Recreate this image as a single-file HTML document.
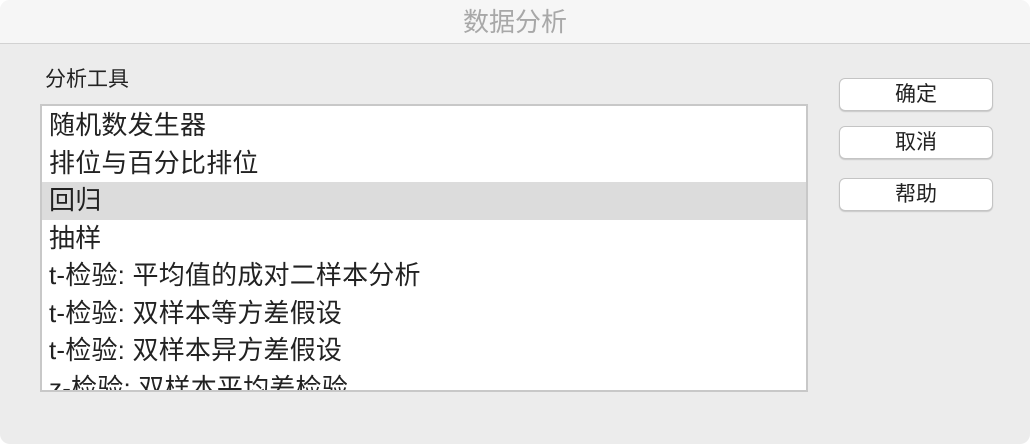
<!DOCTYPE html>
<html><head><meta charset="utf-8"><style>
body{margin:0;width:1030px;height:444px;background:#fff;font-family:"Liberation Sans","Noto Sans CJK SC",sans-serif;position:relative;overflow:hidden}
.win{position:absolute;left:0;top:0;width:1030px;height:444px;background:#ececec;border-radius:10px;overflow:hidden}
.title{position:absolute;left:0;top:0;width:1030px;height:43px;background:#f6f6f6;border-bottom:1px solid #d2d2d2;text-align:center;line-height:44px;font-size:26px;color:#a8a8a8}
.lbl{position:absolute;left:45px;top:63px;font-size:21px;color:#222}
.list{position:absolute;left:40px;top:104px;width:764px;height:284px;background:#fff;border:2px solid #c8c8c8;overflow:hidden}
.row{position:absolute;left:0;width:100%;height:37.5px;line-height:37px;font-size:26px;color:#222;padding-left:7px;box-sizing:border-box;white-space:nowrap;letter-spacing:0.2px}
.sel{background:#dcdcdc}
.btn{position:absolute;left:839px;width:152px;height:31px;background:#fff;border:1px solid #c4c4c4;border-radius:6px;box-shadow:0 1px 1px rgba(0,0,0,.15);text-align:center;line-height:31px;font-size:21px;color:#222}
</style></head><body>
<div class="win">
<div class="title">数据分析</div>
<div class="lbl">分析工具</div>
<div class="list">
<div class="row" style="top:1px">随机数发生器</div>
<div class="row" style="top:38.5px">排位与百分比排位</div>
<div class="row sel" style="top:76px">回归</div>
<div class="row" style="top:113.5px">抽样</div>
<div class="row" style="top:151px">t-检验: 平均值的成对二样本分析</div>
<div class="row" style="top:188.5px">t-检验: 双样本等方差假设</div>
<div class="row" style="top:226px">t-检验: 双样本异方差假设</div>
<div class="row" style="top:263.5px">z-检验: 双样本平均差检验</div>
</div>
<div class="btn" style="top:78px">确定</div>
<div class="btn" style="top:126px">取消</div>
<div class="btn" style="top:178px">帮助</div>
</div>
</body></html>
